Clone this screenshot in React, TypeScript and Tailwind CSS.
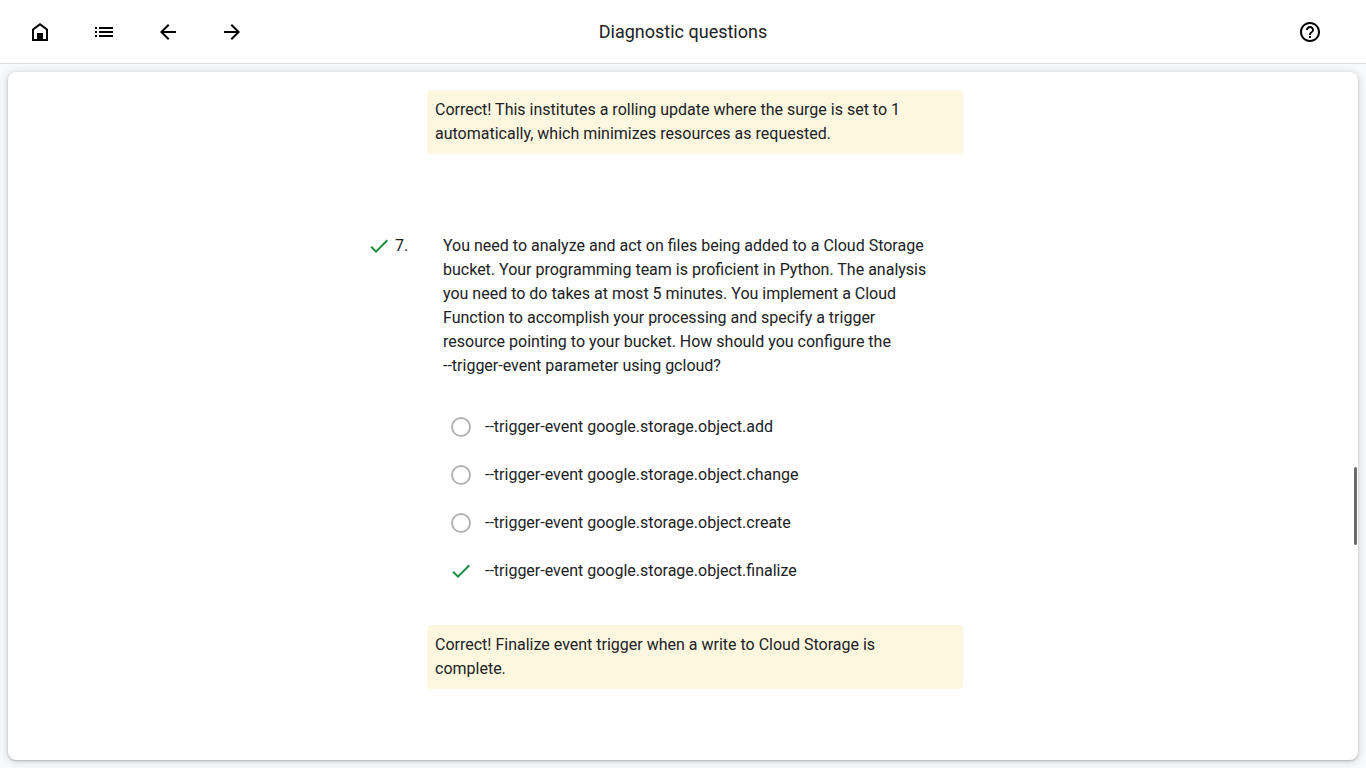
import { useState } from "react";
import { MdArrowBack, MdArrowForward, MdCheck, MdHelpOutline, MdList } from "react-icons/md";

const options = [
  "--trigger-event google.storage.object.add",
  "--trigger-event google.storage.object.change",
  "--trigger-event google.storage.object.create",
  "--trigger-event google.storage.object.finalize",
];
const answer = 3;

function HomeIcon() {
  return (
    <svg viewBox="0 0 24 24" className="size-6" fill="currentColor" aria-hidden="true">
      <path d="M6 19h3v-6h6v6h3v-9l-6-4.5L6 10v9Zm-2 2V9l8-6 8 6v12H4Z" />
    </svg>
  );
}

function Feedback({ children }: { children: string }) {
  return <p className="ml-15 w-[536px] rounded-sm bg-[#fef7e0] py-2 pr-6 pl-2">{children}</p>;
}

export default function App() {
  const [selected, setSelected] = useState(answer);
  const iconButton = "flex size-12 items-center justify-center rounded-full text-black";

  return (
    <div className="flex min-h-screen flex-col bg-[#f8f9fa] font-['Roboto',sans-serif] text-base text-[#202124]">
      <header className="grid h-16 grid-cols-[1fr_auto_1fr] items-center border-b border-[#dadce0] bg-white px-4">
        <nav className="flex gap-4">
          <button className={iconButton} aria-label="Home"><HomeIcon /></button>
          <button className={iconButton} aria-label="Contents"><MdList size={24} /></button>
          <button className={iconButton} aria-label="Previous"><MdArrowBack size={24} /></button>
          <button className={iconButton} aria-label="Next"><MdArrowForward size={24} /></button>
        </nav>
        <h1 className="text-lg leading-6">Diagnostic questions</h1>
        <div className="flex justify-end pr-4">
          <button className={iconButton} aria-label="Help"><MdHelpOutline size={24} /></button>
        </div>
      </header>

      <main className="relative m-2 flex-1 rounded-lg bg-white pt-[18px] pb-16 shadow-[0_1px_2px_rgba(60,64,67,0.3),0_1px_6px_2px_rgba(60,64,67,0.15)]">
        <div className="mx-auto w-[632px]">
          <Feedback>
            Correct! This institutes a rolling update where the surge is set to 1 automatically, which minimizes resources as requested.
          </Feedback>

          <section className="mt-20">
            <div className="flex">
              <MdCheck size={24} className="mr-1 shrink-0 text-[#1e8e3e]" aria-label="Answered correctly" />
              <span className="w-12 shrink-0">7.</span>
              <h2 id="question" className="w-[488px]">
                You need to analyze and act on files being added to a Cloud Storage bucket. Your programming team is proficient in Python. The analysis you need to do takes at most 5 minutes. You implement a Cloud Function to accomplish your processing and specify a trigger resource pointing to your bucket. How should you configure the{" "}
                <span className="whitespace-nowrap">--trigger-event</span> parameter using gcloud?
              </h2>
            </div>

            <div role="radiogroup" aria-labelledby="question" className="mt-[25px] mb-[30px] ml-[82px]">
              {options.map((option, i) => (
                <label key={option} className="flex h-12 items-center">
                  <span className="mr-3 flex size-6 items-center justify-center">
                    <input
                      type="radio"
                      name="trigger"
                      checked={selected === i}
                      onChange={() => setSelected(i)}
                      className="peer size-5 appearance-none rounded-full border-2 border-[#b4b4b4] checked:sr-only"
                    />
                    <MdCheck size={24} className="hidden text-[#1e8e3e] peer-checked:block" aria-hidden="true" />
                  </span>
                  {option}
                </label>
              ))}
            </div>

            <Feedback>Correct! Finalize event trigger when a write to Cloud Storage is complete.</Feedback>
          </section>
        </div>
        <div className="absolute top-[395px] right-px h-[78px] w-[3px] rounded-sm bg-[#6b6b6b]" />
      </main>
    </div>
  );
}
